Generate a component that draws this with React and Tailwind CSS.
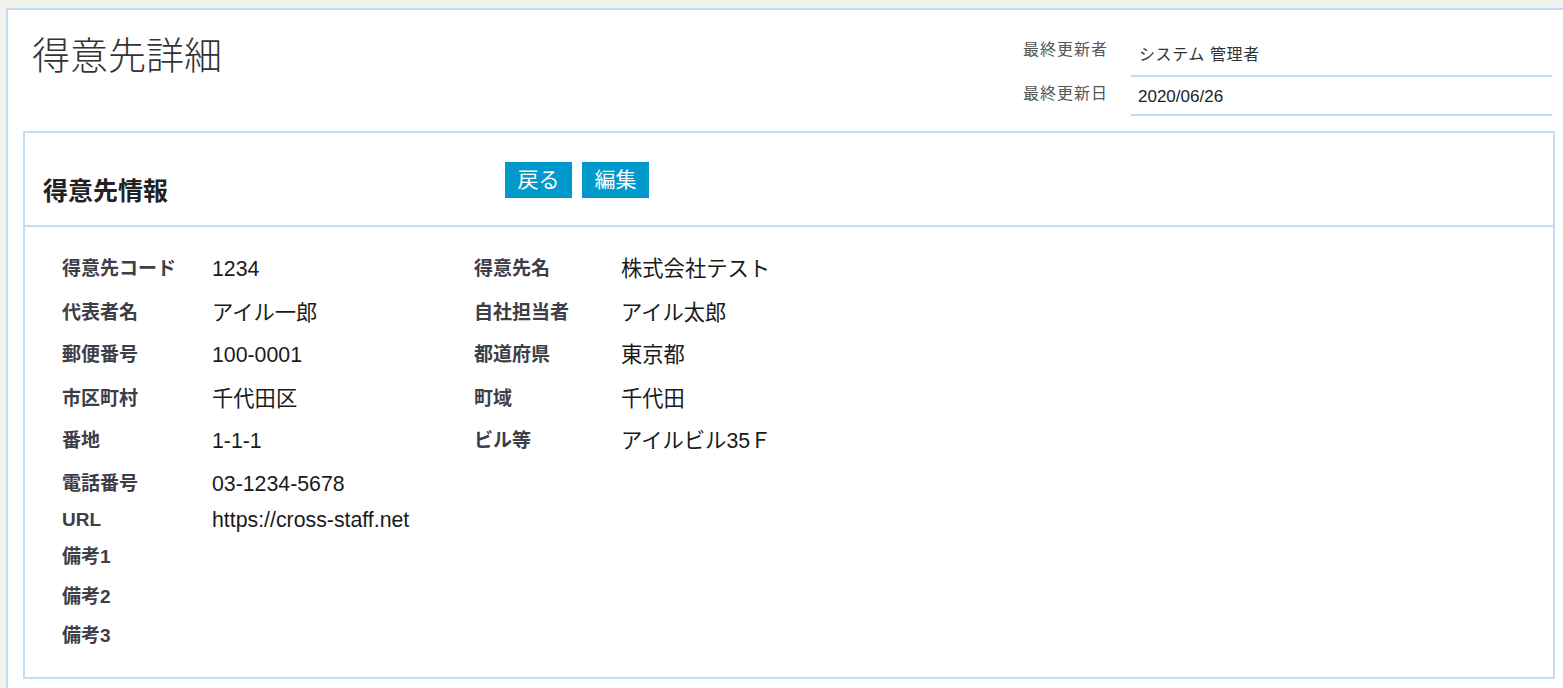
import React from "react";

const FONT = { fontFamily: '"Liberation Sans", "Noto Sans CJK JP", sans-serif' };

const rows = [
  { l: ["得意先コード", "1234"], r: ["得意先名", "株式会社テスト"], mt: "" },
  { l: ["代表者名", "アイル一郎"], r: ["自社担当者", "アイル太郎"], mt: "mt-[14px]" },
  { l: ["郵便番号", "100-0001"], r: ["都道府県", "東京都"], mt: "mt-[12px]" },
  { l: ["市区町村", "千代田区"], r: ["町域", "千代田"], mt: "mt-[14px]" },
  { l: ["番地", "1-1-1"], r: ["ビル等", "アイルビル35Ｆ"], mt: "mt-[12px]" },
  { l: ["電話番号", "03-1234-5678"], r: null, mt: "mt-[13px]" },
  { l: ["URL", "https://cross-staff.net"], r: null, mt: "mt-[6px]" },
  { l: ["備考1", ""], r: null, mt: "mt-[7px]" },
  { l: ["備考2", ""], r: null, mt: "mt-[10px]" },
  { l: ["備考3", ""], r: null, mt: "mt-[9px]" },
];

export default function App() {
  return (
    <div className="min-h-screen bg-[#f2f1ee] pt-[8px] pl-[6px] overflow-hidden" style={FONT}>
      <div className="bg-white border-l-2 border-t-2 border-[#c2dcf4] min-h-[690px]">
        {/* page header */}
        <div className="flex items-start justify-between">
          <h1 className="pl-[24px] pt-[23px] text-[38px] leading-[46px] font-light text-[#333]">
            得意先詳細
          </h1>
          <div className="pt-[27px] pr-[11px]">
            <div className="flex h-[40px]">
              <div className="w-[108px] pt-[1px] text-[16px] leading-[24px] tracking-[1px] text-[#555]">
                最終更新者
              </div>
              <div className="w-[421px] border-b-2 border-[#c2dcf4] pl-[8px] pt-[6px] text-[16px] leading-[24px] tracking-[0.6px] text-[#333]">
                システム 管理者
              </div>
            </div>
            <div className="flex h-[39px]">
              <div className="w-[108px] pt-[5px] text-[16px] leading-[24px] tracking-[1px] text-[#555]">
                最終更新日
              </div>
              <div className="w-[421px] border-b-2 border-[#c2dcf4] pl-[7px] pt-[8px] text-[17px] leading-[24px] text-[#222]">
                2020/06/26
              </div>
            </div>
          </div>
        </div>

        {/* card */}
        <div className="ml-[15px] mr-[8px] mt-[15px] border-2 border-[#c2dcf4]">
          <div className="flex items-start h-[94px] border-b-2 border-[#c2dcf4]">
            <h2 className="w-[480px] shrink-0 pl-[18px] pt-[42px] text-[25px] leading-[32px] font-bold text-[#222]">
              得意先情報
            </h2>
            <div className="flex gap-[10px] pt-[29px]">
              <button className="h-[36px] w-[67px] bg-[#0099cc] text-white text-[21px] leading-[36px]">
                戻る
              </button>
              <button className="h-[36px] w-[67px] bg-[#0099cc] text-white text-[21px] leading-[36px]">
                編集
              </button>
            </div>
          </div>
          <div className="pl-[37px] pt-[27px] pb-[26px]">
            {rows.map((row, i) => (
              <div
                key={i}
                className={`grid grid-cols-[150px_262px_147px_1fr] items-center h-[30px] ${row.mt}`}
              >
                <div className="text-[19px] font-bold text-[#3e3e48] leading-[30px]">{row.l[0]}</div>
                <div className="text-[21.3px] text-[#1a1a1a] leading-[30px]">{row.l[1]}</div>
                <div className="text-[19px] font-bold text-[#3e3e48] leading-[30px]">{row.r ? row.r[0] : ""}</div>
                <div className="text-[21.3px] text-[#1a1a1a] leading-[30px]">{row.r ? row.r[1] : ""}</div>
              </div>
            ))}
          </div>
        </div>
      </div>
    </div>
  );
}
